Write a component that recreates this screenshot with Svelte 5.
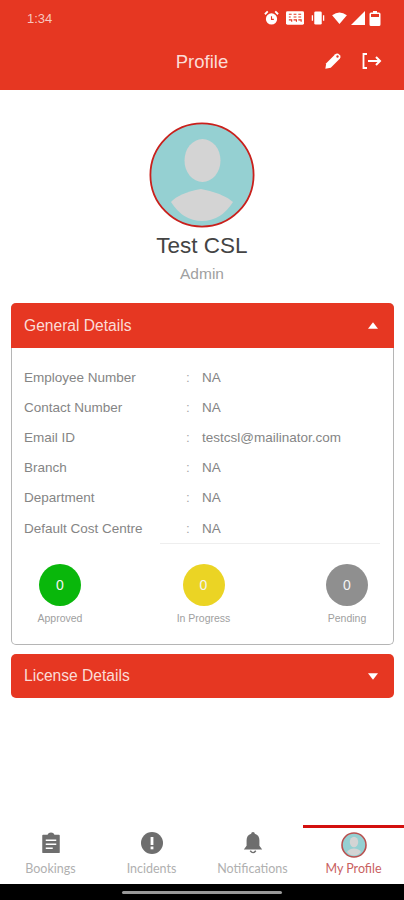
<script>
  const details = [
    { label: "Employee Number", value: "NA" },
    { label: "Contact Number", value: "NA" },
    { label: "Email ID", value: "testcsl@mailinator.com" },
    { label: "Branch", value: "NA" },
    { label: "Department", value: "NA" },
    { label: "Default Cost Centre", value: "NA" },
  ];

  const stats = [
    { label: "Approved", color: "#09b70b" },
    { label: "In Progress", color: "#ebd424" },
    { label: "Pending", color: "#8f8f8f" },
  ];
</script>

<div class="page">
  <header class="appbar">
    <div class="status">
      <span class="time">1:34</span>
      <div class="status-icons">
        <svg width="15" height="16" viewBox="0 0 16 16">
          <path d="M1 4 L4 1 M15 4 L12 1" stroke="#fff" stroke-width="2" />
          <circle cx="8" cy="9" r="6" fill="#fff" />
          <path d="M8 6 V9.5 H10.5" stroke="#e63722" stroke-width="1.2" fill="none" />
        </svg>
        <svg width="18" height="14" viewBox="0 0 19 14">
          <rect width="19" height="14" rx="1.5" fill="#fff" />
          <path d="M3 3 h3 M8 3 h3 M13 3 h3 M3 6 h2 M8 6 h3 M13 6 h3 M3 9 h3 v2 M8 9 h3 v2 M13 9 h3 v2" stroke="#e63722" stroke-width="1.2" fill="none" />
        </svg>
        <svg width="14" height="14" viewBox="0 0 15 14">
          <rect x="3.5" y="0" width="8" height="14" rx="1.5" fill="#fff" />
          <path d="M1.5 4 V10 M13.5 4 V10" stroke="#fff" stroke-width="1.4" />
        </svg>
        <div class="signal-group">
          <svg width="15" height="12" viewBox="0 0 16 13">
            <path d="M0 3.5 Q8 -2.5 16 3.5 L8 13 Z" fill="#fff" />
          </svg>
          <svg width="14" height="14" viewBox="0 0 14 14">
            <path d="M14 0 V14 H0 Z" fill="#fff" />
          </svg>
          <svg class="battery" width="12" height="15" viewBox="0 0 11 15">
            <path d="M3.5 0 H7.5 V1.5 H9.5 Q11 1.5 11 3 V13.5 Q11 15 9.5 15 H1.5 Q0 15 0 13.5 V3 Q0 1.5 1.5 1.5 H3.5 Z" fill="#fff" />
            <rect x="1.5" y="3" width="8" height="3" fill="#e63722" />
          </svg>
        </div>
      </div>
    </div>
    <div class="toolbar">
      <h1>Profile</h1>
      <div class="actions">
        <svg width="18" height="18" viewBox="0 0 20 20">
          <path d="M1.5 18.5 L2.5 12.5 L12.5 2.5 Q14 1 16 2 L18 4 Q19 6 17.5 7.5 L7.5 17.5 Z" fill="#fff" />
          <circle cx="15" cy="5" r="1.3" fill="#e63722" />
        </svg>
        <svg width="20" height="18" viewBox="0 0 20 18">
          <path d="M5 2 H1.5 V16 H5" stroke="#fff" stroke-width="1.8" fill="none" />
          <path d="M6 9 H18 M14 5 L18 9 L14 13" stroke="#fff" stroke-width="2" fill="none" />
        </svg>
      </div>
    </div>
  </header>

  <section class="profile">
    <svg class="avatar" width="106" height="106" viewBox="0 0 106 106">
      <circle cx="53" cy="53" r="51.6" fill="#95d0d2" stroke="#c9201c" stroke-width="1.8" />
      <ellipse cx="53.5" cy="38.5" rx="18" ry="21.5" fill="#d4d4d4" />
      <path d="M22 80 Q30 71 52 67 Q74 71 84 80 Q72 99 53 99 Q34 99 22 80 Z" fill="#d4d4d4" />
    </svg>
    <div class="name">Test CSL</div>
    <div class="role">Admin</div>
  </section>

  <section class="card">
    <div class="card-head">
      <span>General Details</span>
      <svg width="10" height="7" viewBox="0 0 11 7"><path d="M5.5 0 L11 7 H0 Z" fill="#fff" /></svg>
    </div>
    <div class="card-body">
      {#each details as row}
        <div class="row">
          <span class="row-label">{row.label}</span>
          <span class="row-sep">:</span>
          <span class="row-value">{row.value}</span>
        </div>
      {/each}
      <div class="divider"></div>
      <div class="stats">
        {#each stats as stat}
          <div class="stat">
            <div class="stat-dot" style="background: {stat.color}">0</div>
            <div class="stat-label">{stat.label}</div>
          </div>
        {/each}
      </div>
    </div>
  </section>

  <section class="collapsed">
    <span>License Details</span>
    <svg width="10" height="7" viewBox="0 0 11 7"><path d="M0 0 H11 L5.5 7 Z" fill="#fff" /></svg>
  </section>

  <nav class="tabs">
    <div class="tab">
      <div class="tab-icon">
        <svg width="20" height="21" viewBox="0 0 22 24">
          <path d="M2 3 H7 Q8 0.5 11 0.5 Q14 0.5 15 3 H20 Q21 3 21 4 V23 Q21 24 20 24 H2 Q1 24 1 23 V4 Q1 3 2 3 Z" fill="#6e6e6e" />
          <path d="M5 9.5 H17 M5 14 H17 M5 18.5 H13" stroke="#fff" stroke-width="1.8" />
        </svg>
      </div>
      <span>Bookings</span>
    </div>
    <div class="tab">
      <div class="tab-icon">
        <svg width="22" height="22" viewBox="0 0 22 22">
          <circle cx="11" cy="11" r="11" fill="#6e6e6e" />
          <rect x="9.6" y="5" width="2.8" height="8" fill="#fff" />
          <rect x="9.6" y="14.5" width="2.8" height="2.8" fill="#fff" />
        </svg>
      </div>
      <span>Incidents</span>
    </div>
    <div class="tab">
      <div class="tab-icon">
        <svg width="20" height="22" viewBox="0 0 20 24">
          <path d="M10 0 Q12 0 12 2 Q17 3.5 17 9 V15 L20 19 H0 L3 15 V9 Q3 3.5 8 2 Q8 0 10 0 Z" fill="#6e6e6e" />
          <path d="M7 20.5 Q10 24.5 13 20.5" stroke="#6e6e6e" stroke-width="1.6" fill="none" />
        </svg>
      </div>
      <span>Notifications</span>
    </div>
    <div class="tab active">
      <div class="tab-icon">
        <svg width="26" height="26" viewBox="0 0 26 26">
          <circle cx="13" cy="13" r="12" fill="#95d0d2" stroke="#b9504f" stroke-width="1.6" />
          <ellipse cx="13" cy="10" rx="4.2" ry="5.2" fill="#d4d4d4" />
          <path d="M6 20 Q8 16.5 13 16.5 Q18 16.5 20 20 Q17 23.5 13 23.5 Q9 23.5 6 20 Z" fill="#d4d4d4" />
        </svg>
      </div>
      <span>My Profile</span>
    </div>
  </nav>

  <div class="gesture-bar"><div class="pill"></div></div>
</div>

<style>
  :global(body) {
    margin: 0;
    background: #fff;
  }

  .page {
    width: 404px;
    height: 900px;
    display: flex;
    flex-direction: column;
    font-family: "Liberation Sans", Arial, sans-serif;
    overflow: hidden;
    background: #fff;
  }

  .appbar {
    height: 90px;
    background: #e63722;
    color: #fff;
    flex: none;
  }

  .status {
    height: 36px;
    display: flex;
    align-items: center;
    justify-content: space-between;
    padding: 0 23px 0 27px;
  }

  .time {
    font-size: 13px;
    color: #f7c6bf;
  }

  .status-icons {
    display: flex;
    align-items: center;
    gap: 7px;
  }

  .signal-group {
    display: flex;
    align-items: center;
    gap: 4px;
  }

  .toolbar {
    position: relative;
    height: 50px;
    display: flex;
    align-items: center;
    justify-content: center;
  }

  h1 {
    margin: 0 0 -1px;
    font-size: 18.5px;
    font-weight: 400;
    color: #fbdcd7;
  }

  .actions {
    position: absolute;
    right: 22px;
    top: 16px;
    display: flex;
    align-items: center;
    gap: 20px;
  }

  .profile {
    display: flex;
    flex-direction: column;
    align-items: center;
    padding-top: 32px;
    flex: none;
  }

  .avatar {
    display: block;
  }

  .name {
    margin-top: 3px;
    font-size: 22.5px;
    line-height: 30px;
    color: #444;
  }

  .role {
    margin-top: 4px;
    font-size: 15.5px;
    line-height: 18px;
    color: #a0a0a0;
  }

  .card {
    margin: 20px 10px 0 11px;
    border: 1px solid #b5b5b5;
    border-top: none;
    border-radius: 5px;
    flex: none;
  }

  .card-head,
  .collapsed {
    height: 45px;
    margin: 0 -1px;
    background: #e63722;
    color: #fbdcd7;
    display: flex;
    align-items: center;
    justify-content: space-between;
    padding: 0 16px 0 13px;
    font-size: 15.6px;
    border-radius: 5px 5px 0 0;
  }

  .collapsed {
    margin: 9px 10px 0 11px;
    height: 44px;
    border-radius: 5px;
    flex: none;
  }

  .card-body {
    padding: 14px 12px 0;
    height: 282px;
  }

  .row {
    height: 30.2px;
    display: flex;
    align-items: center;
    font-size: 13.5px;
    color: #858585;
  }

  .row-label {
    width: 162px;
  }

  .row-sep {
    width: 16px;
    color: #aaa;
  }

  .divider {
    height: 1px;
    background: #eee;
    margin: 0 1px 0 136px;
  }

  .stats {
    display: flex;
    justify-content: space-between;
    margin: 20px -1px 0 1px;
  }

  .stat {
    width: 70px;
    display: flex;
    flex-direction: column;
    align-items: center;
  }

  .stat-dot {
    width: 42px;
    height: 42px;
    border-radius: 50%;
    display: flex;
    align-items: center;
    justify-content: center;
    color: #f4f4f4;
    font-size: 14px;
  }

  .stat-label {
    margin-top: 5px;
    font-size: 10.5px;
    line-height: 14px;
    color: #a0a0a0;
  }

  .tabs {
    margin-top: auto;
    height: 59px;
    display: flex;
    flex: none;
  }

  .tab {
    flex: 1;
    display: flex;
    flex-direction: column;
    align-items: center;
    gap: 3px;
    padding-top: 7px;
    font-family: Lato, sans-serif;
    font-size: 12.5px;
    line-height: 16px;
    color: #b0b0b0;
    min-width: 0;
  }

  .tab-icon {
    height: 26px;
  }

  .tab-icon svg {
    display: block;
  }

  .tab.active {
    border-top: 3px solid #d3100f;
    padding-top: 4px;
    color: #c9615f;
  }

  .gesture-bar {
    height: 16px;
    background: #000;
    display: flex;
    align-items: center;
    justify-content: center;
    flex: none;
  }

  .pill {
    width: 160px;
    height: 3px;
    border-radius: 2px;
    background: #999;
  }
</style>
